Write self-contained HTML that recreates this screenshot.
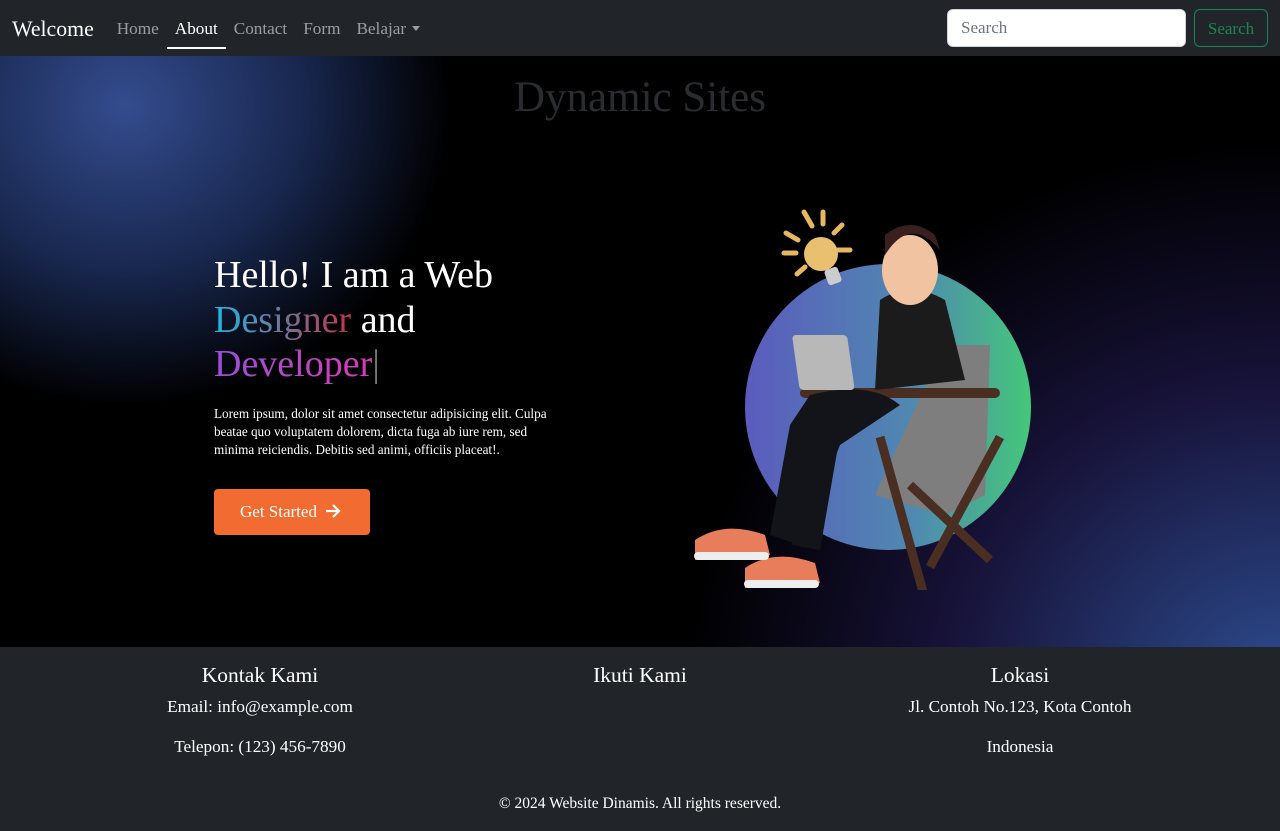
<!DOCTYPE html>
<html><head><meta charset="utf-8">
<style>
*{box-sizing:border-box;margin:0;padding:0}
body{width:1280px;height:831px;overflow:hidden;font-family:"Liberation Serif",Georgia,serif;background:#212529;color:#fff}
nav{height:56px;background:#212529;display:flex;align-items:center;padding:2px 12px 0;position:relative}
.brand{font-size:21.8px;color:#fff;margin-right:15px}
.nl{font-size:17.2px;color:rgba(255,255,255,.55);padding:8px 8px;position:relative}
.nl.act{color:#fff}
.nl.act:after{content:"";position:absolute;left:0;right:0;bottom:-2px;height:2px;background:#fff}
.caret{display:inline-block;border-top:5px solid rgba(255,255,255,.55);border-left:4px solid transparent;border-right:4px solid transparent;margin-left:6px;vertical-align:3px}
.srch{position:absolute;left:947px;top:9px;width:239px;height:38px;background:#fff;border:1px solid #ced4da;border-radius:6px;color:#6c757d;font-size:17px;padding:8px 13px}
.sbtn{position:absolute;left:1194px;top:9px;width:74px;height:38px;border:1px solid #198754;border-radius:6px;color:#198754;font-size:17px;text-align:center;line-height:38px}
.hero{position:absolute;top:56px;left:0;width:1280px;height:591px;background:#000;overflow:hidden}
.g1{position:absolute;left:-200px;top:-250px;width:650px;height:600px;background:radial-gradient(closest-side,rgba(55,80,150,.95),rgba(40,65,130,.6) 55%,rgba(0,0,0,0));}
.g2{position:absolute;left:680px;top:80px;width:800px;height:700px;background:radial-gradient(ellipse at 75% 80%,rgba(50,85,160,.9),rgba(45,35,110,.5) 40%,rgba(0,0,0,0) 70%)}
.title{position:absolute;top:17px;width:100%;text-align:center;font-size:43px;color:#2a2c30}
h1{position:absolute;left:214px;top:197px;font-weight:normal;font-size:38px;line-height:44.5px;width:420px;white-space:nowrap}
.d1{background:linear-gradient(90deg,#1fb7e0,#c3334b);-webkit-background-clip:text;color:transparent}
.d2{background:linear-gradient(90deg,#9b4fd8,#d63db5);-webkit-background-clip:text;color:transparent}
.cur{color:#777;font-weight:lighter}
.p{position:absolute;left:214px;top:349px;width:345px;font-size:13.2px;line-height:18px;white-space:nowrap}
.btn{position:absolute;left:214px;top:433px;width:156px;height:46px;background:#f26b30;border-radius:4px;font-size:17px;line-height:46px;padding-left:26px}
footer{position:absolute;top:647px;left:0;width:1280px;height:184px;background:#212529}
.col{position:absolute;top:16px;width:420px;text-align:center}
.col h3{font-weight:normal;font-size:21.5px;margin-bottom:10px;line-height:24px}
.col p{font-size:17.2px;margin-bottom:20px;line-height:20px}
.copy{position:absolute;top:148px;width:100%;text-align:center;font-size:15.5px}
</style></head><body>
<nav><span class="brand">Welcome</span><span class="nl">Home</span><span class="nl act">About</span><span class="nl">Contact</span><span class="nl">Form</span><span class="nl">Belajar<span class="caret"></span></span>
<div class="srch">Search</div><div class="sbtn">Search</div></nav>
<div class="hero"><div class="g1"></div><div class="g2"></div>
<div class="title">Dynamic Sites</div>
<h1>Hello! I am a Web<br><span class="d1">Designer</span> and<br><span class="d2">Developer</span><span class="cur">|</span></h1>
<div class="p">Lorem ipsum, dolor sit amet consectetur adipisicing elit. Culpa<br>beatae quo voluptatem dolorem, dicta fuga ab iure rem, sed<br>minima reiciendis. Debitis sed animi, officiis placeat!.</div>
<div class="btn">Get Started &nbsp;<svg width="16" height="14" viewBox="0 0 16 14" style="vertical-align:-1px"><path d="M1 7h13M8 1l6 6-6 6" stroke="#fff" stroke-width="2.2" fill="none"/></svg></div>
<svg style="position:absolute;left:680px;top:144px" width="380" height="390" viewBox="0 0 380 390">
<defs><linearGradient id="c" x1="0" x2="1"><stop offset="0" stop-color="#5b5bbd"/><stop offset=".6" stop-color="#4f8ab0"/><stop offset="1" stop-color="#45c77a"/></linearGradient></defs>
<circle cx="208" cy="207" r="143" fill="url(#c)"/>
<g stroke="#e8b860" stroke-width="5" stroke-linecap="round"><path d="M124 12l8 14M143 12v12M162 25l-8 8M170 50h-12M106 33l12 7M104 53h12M117 74l8-7"/></g>
<circle cx="141" cy="54" r="17" fill="#e9c070"/><rect x="146" y="68" width="14" height="16" rx="3" fill="#ccc" transform="rotate(-20 153 76)"/>
<path d="M265 145h45l-5 150-40 20-70-20z" fill="#7e7e7e"/>
<path d="M200 237l50 180M320 237l-70 130M230 285l80 75" stroke="#4a2e22" stroke-width="9" fill="none"/>
<rect x="120" y="188" width="200" height="10" rx="5" fill="#4a2e22"/>
<path d="M200 100q30-20 65 0l20 80-90 10z" fill="#1b1b1b"/>
<path d="M130 195q60-15 90 10l-60 40-40 100-30-10 20-110z" fill="#12141a"/>
<path d="M160 235l-20 115-28-5 20-100z" fill="#12141a"/>
<rect x="93" y="135" width="55" height="55" rx="4" fill="#b8b8b8" transform="skewX(8)"/>
<ellipse cx="230" cy="70" rx="28" ry="35" fill="#f2c3a1"/><path d="M205 55q25-40 55-5l-5-15q-25-20-50 0z" fill="#3a1f1f"/>
<path d="M15 340q30-20 70-5l5 20-75 5z" fill="#e77d5b"/><path d="M65 368q30-20 70-5l5 20-75 5z" fill="#e77d5b"/>
<rect x="14" y="352" width="75" height="8" rx="4" fill="#eee"/><rect x="64" y="380" width="75" height="8" rx="4" fill="#eee"/>
</svg>
</div>
<footer>
<div class="col" style="left:50px"><h3>Kontak Kami</h3><p>Email: info@example.com</p><p>Telepon: (123) 456-7890</p></div>
<div class="col" style="left:430px"><h3>Ikuti Kami</h3></div>
<div class="col" style="left:810px"><h3>Lokasi</h3><p>Jl. Contoh No.123, Kota Contoh</p><p>Indonesia</p></div>
<div class="copy">© 2024 Website Dinamis. All rights reserved.</div>
</footer>
</body></html>
